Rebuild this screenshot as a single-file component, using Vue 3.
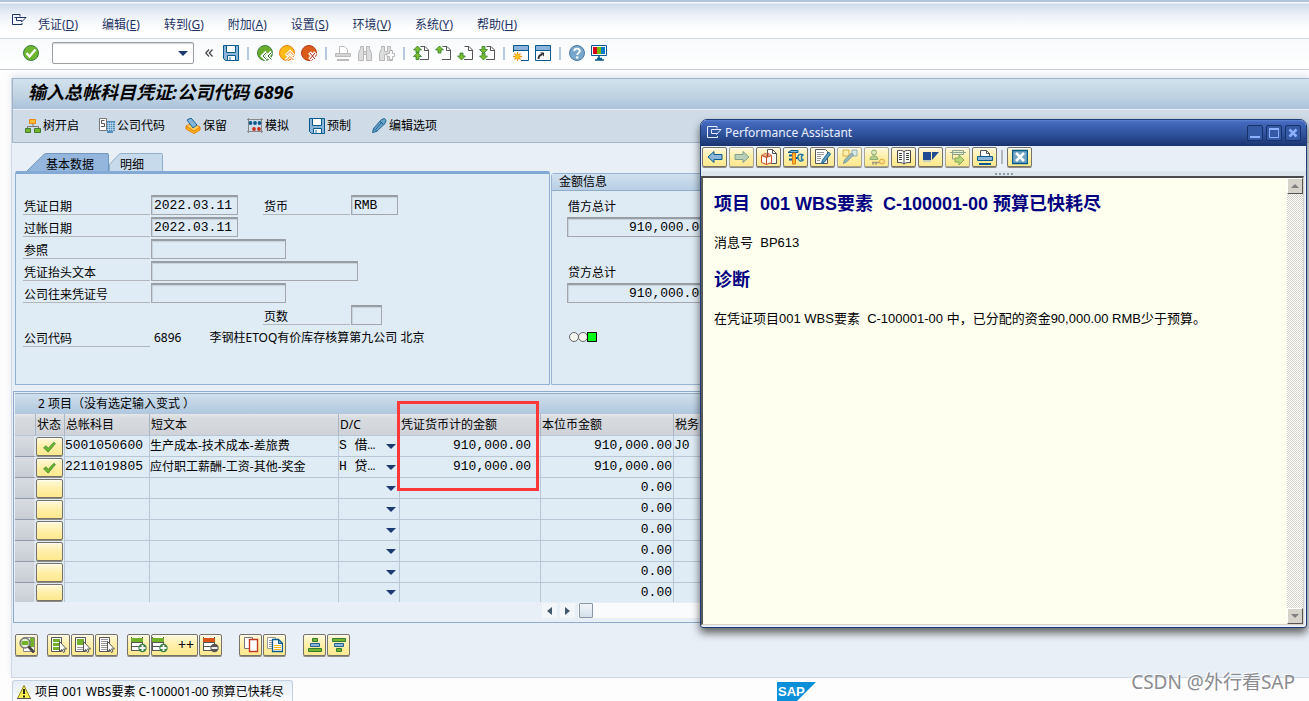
<script setup>
import { ref } from 'vue'

const menus = [
  ['凭证', 'D'], ['编辑', 'E'], ['转到', 'G'], ['附加', 'A'],
  ['设置', 'S'], ['环境', 'V'], ['系统', 'Y'], ['帮助', 'H'],
]

const page = '<path d="M7.5 1.5H12L15.5 5V14.5H7" fill="#fff" stroke="#555"/><path d="M11.5 1.5V5.5H15.5" fill="none" stroke="#555"/>'
const up = (x, y) => `<path d="M${x} ${y}l4 4h-2.500v3h-3v-3h-2.500z" fill="#7cbb2c" stroke="#2f7d32" stroke-width=".8"/>`
const down = (x, y) => `<path d="M${x} ${y}l4-4h-2.500v-3h-3v3h-2.500z" fill="#7cbb2c" stroke="#2f7d32" stroke-width=".8"/>`
const doc = '<path d="M.5.5h10v14H.5z" fill="#fff" stroke="#555"/>'
const cursor = '<path d="M8.500 4.500v10l2.500-2 1.500 3 1.500-1-1.500-2.500h3z" fill="#fff" stroke="#555"/>'
const rowsDoc = '<path d="M0 0h12v14H0z" fill="#fff"/><path d="M.5 0v14M11.500 0v14M0 5.500h12M0 9.500h12M0 13.500h12" stroke="#555" fill="none"/>'

const icons = {
  exit: '<path d="M9 3.500V1.500H1.500V11.500H11V10" fill="none" stroke="#1d3263"/><path d="M3.500 4.500H15L10.500 9V7.500H5.500V4.500" fill="#fff" stroke="#1d3263"/>',
  exitLight: '<path d="M11 3.500V1.500H1.500V12.500H11.500V11" fill="none" stroke="#e6edff"/><path d="M5.500 4.500H15L10.500 9.500V8.500H5.500V4.500" fill="none" stroke="#e6edff"/>',
  ok: '<circle cx="8" cy="8" r="7.500" fill="#6cb52d" stroke="#3f8045"/><path d="M3.500 8l3 3.500 6-7" fill="none" stroke="#fff" stroke-width="2.400"/>',
  save: '<path d="M.5.500h15v15H2.500l-2-2z" fill="#8cb6d9" stroke="#075b8c"/><path d="M3.500.500h9v7h-9zM4.500 10.500h8v5h-8z" fill="#fff" stroke="#075b8c"/><path d="M6 12h2v3H6z" fill="#8cb6d9"/>',
  back: '<circle cx="8" cy="8" r="7.500" fill="#69ad2b" stroke="#3f8045"/><path d="M9.500 7l-4 4 4 4M14.500 7l-4 4 4 4" stroke="#fff" stroke-width="3.200" fill="none"/><path d="M9.500 7.500L6 11l3.500 3.500M14.500 7.500L11 11l3.500 3.500" stroke="#2b7a35" stroke-width="1" fill="none"/>',
  exitUp: '<circle cx="8" cy="8" r="7.500" fill="#fdbb16" stroke="#ee7d19"/><path d="M7 10.500l4-4 4 4M7 15l4-4 4 4" stroke="#fff" stroke-width="3" fill="none"/><path d="M7.500 10L11 6.500l3.500 3.500M7.500 15l3.500-3.500 3.500 3.500" stroke="#ef7918" fill="none"/>',
  cancel: '<circle cx="8" cy="8" r="7.500" fill="#db5b1b" stroke="#b23b18"/><path d="M8.500 7.500l6 7M14.500 7.500l-6 7" stroke="#fff" stroke-width="3.600"/><path d="M9 8l5 6M14 8l-5 6" stroke="#b22c19" stroke-width="1"/>',
  printOff: '<path d="M4.500 8V1.500h5l3 3V8" fill="#fff" stroke="#bbb"/><path d="M.5 8.500h15v3H.5z" fill="#d3d3d3" stroke="#bbb"/><path d="M2 14h12v2H2z" fill="#bbb"/>',
  find: '<path d="M1.500 15.500v-7l2-5v-2h3v5h3v-5h3v2l2 5v7h-5v-6h-3v6z" fill="#ddd" stroke="#b7b7b7"/><path d="M6.500 5v5M9.500 5v5" stroke="#b7b7b7"/>',
  findNext: '<path d="M.5 15.500v-7l2-5v-2h3v5h3v-5h3v2l2 5v7h-5v-6h-3v6z" fill="#ddd" stroke="#b7b7b7"/><path d="M10.500 5.500h3v3h2v3h-2v3h-3v-3H8v-3h2.500z" fill="#fff" stroke="#b7b7b7"/>',
  first: page + up(4.5, 1) + up(4.5, 7.5),
  prev: page + up(4.5, 1),
  next: page + down(4.5, 15),
  last: page + down(4.5, 8.5) + down(4.5, 15),
  session: '<path d="M.5.500h15v15H.5z" fill="#fff" stroke="#075b8c"/><path d="M1 1h14v4H1z" fill="#8cb3db"/><path d="M0 5.500h16" stroke="#075b8c"/><path d="M0 7h8v9H0z" fill="#fff"/><path d="M4.500 7v9M0 11.500h9M1.500 8.500l6 6M7.500 8.500l-6 6" stroke="#f7941d" stroke-width="1.300"/><circle cx="4.500" cy="11.500" r="2.500" fill="#ffc21c"/>',
  shortcut: '<path d="M.5.500h15v15H.5z" fill="#fff" stroke="#075b8c"/><path d="M1 1h14v4H1z" fill="#8cb3db"/><path d="M0 5.500h16" stroke="#075b8c"/><path d="M3.500 14c0-3 1-4 3.500-4.500" stroke="#333" stroke-width="1.800" fill="none"/><path d="M5 7.500h4v4z" fill="#333"/>',
  help: '<circle cx="8" cy="8" r="7.500" fill="#79a6cc" stroke="#4b7ba6"/><path d="M5.300 6c0-3.200 5.600-3.200 5.500 0 0 1.800-2.600 2-2.600 4" stroke="#fff" stroke-width="1.900" fill="none"/><circle cx="8.200" cy="12.500" r="1.300" fill="#fff"/>',
  monitor: '<path d="M.5.500h15v10H.5z" fill="#fff" stroke="#075b8c"/><path d="M2 2h4v7H2z" fill="#d6001c"/><path d="M6 2h4v7H6z" fill="#76b900"/><path d="M10 2h4v7h-4z" fill="#0079c8"/><path d="M8 11v3M4 15h9M6 13.500h5" stroke="#075b8c" stroke-width="1.600"/>',
  tree: '<path d="M8 6v3M2.500 11V8.500h11V11" stroke="#777" fill="none"/><path d="M4.500 1.500h6v4h-6z" fill="#fdbb30" stroke="#e88715"/><path d="M.5 10.500h5v4h-5zM9.500 10.500h6v4h-6z" fill="#77b22f" stroke="#3f7d30"/>',
  company: '<path d="M.5.500h7v12h-7z" fill="#fff" stroke="#777"/><path d="M5.500 2.500H2.500v3H5.500V8.500H2" stroke="#555" fill="none"/><path d="M8 3h8v10h-2v2H8z" fill="#4e8cbc"/><path d="M9.500 4v9M11.500 4v9M13.500 4v9M8 5.500h8M8 7.500h8M8 9.500h8M8 11.500h8" stroke="#cbe2f3" stroke-width=".6"/>',
  hold: '<path d="M1 8l8 5 6-4v3l-6 3.500L1 11z" fill="#fdbb16" stroke="#e77d12"/><path d="M1 8l6-3 8 4-6 4z" fill="#ffd35a" stroke="#e77d12"/><path d="M2 2l4-2 6 7-4 3z" fill="#84b6dc" stroke="#1e608f"/>',
  simulate: '<path d="M1.500 0v15M14.500 0v15M0 1.500h16M0 13.500h16" stroke="#888"/><g fill="#075b8c"><circle cx="3.500" cy="5" r="1.900"/><circle cx="8" cy="5" r="1.900"/><circle cx="12.500" cy="5" r="1.900"/></g><g fill="#c9301c"><circle cx="7" cy="11" r="1.900"/><circle cx="12" cy="11" r="1.900"/></g>',
  pencil: '<path d="M1.500 14.500l1-4 8-9 3-1 1.500 2-1 3-8.500 8z" fill="#69a3c9" stroke="#1f658f"/><path d="M3 10.500l3 3M9 3.500l3.500 3M5 11l6-7" stroke="#1f658f" fill="none"/>',
  check: '<path d="M1 8l3-2.500 2.500 3 6.500-7 2 1.500-8.500 10z" fill="#6fb62c" stroke="#38803a" stroke-width=".8"/>',
  detail: '<path d="M4.500.500h11v14h-11z" fill="#fff" stroke="#888"/><path d="M11 1h4v9h-4z" fill="#72b12a"/><circle cx="6" cy="6" r="5" fill="#e4efd9" stroke="#777" stroke-width="1.400"/><path d="M2.500 4h7v4h-7z" fill="#72b12a"/><path d="M9.500 9.500l5.500 6" stroke="#444" stroke-width="2.800"/>',
  selAll: doc + '<path d="M2 2h7v3H2zM2 6h7v3H2zM2 10h7v3H2z" fill="#72b12a"/>' + cursor,
  selBlock: doc + '<path d="M2 2h7v6H2z" fill="#72b12a"/><path d="M2 10.500h7M2 12.500h7" stroke="#999"/>' + cursor,
  desel: doc + '<path d="M2 2.500h7M2 4.500h7M2 6.500h7M2 8.500h7M2 10.500h7M2 12.500h7" stroke="#999"/>' + cursor,
  insert: rowsDoc + '<path d="M0 1h12v4H0z" fill="#72b12a"/><circle cx="11.500" cy="11" r="4.200" fill="#368044"/><path d="M11.500 8v6M8.500 11h6" stroke="#fff" stroke-width="1.800"/>',
  remove: rowsDoc + '<path d="M0 1h12v4H0z" fill="#dd5317"/><circle cx="11.500" cy="11" r="4.200" fill="#555"/><path d="M8.500 11h6" stroke="#fff" stroke-width="1.800"/>',
  copyRed: '<path d="M1.500.500h8v11h-8z" fill="#fff" stroke="#777"/><path d="M6.500 2.500h8v12h-8z" fill="#fff" stroke="#c33a24" stroke-width="1.400"/>',
  copyBlue: '<path d="M.5.500h8v11h-8z" fill="#fff" stroke="#999"/><path d="M2 3.500h3M2 5.500h3M2 7.500h3M2 9.500h3" stroke="#999"/><path d="M5.500 2.500h6l4 4v8h-10z" fill="#fff" stroke="#075b8c" stroke-width="1.300"/><path d="M11.500 2.500v4h4z" fill="#7cabd0" stroke="#075b8c"/><path d="M7 8.500h7M7 10.500h7M7 12.500h7" stroke="#f4b51c"/>',
  sortUp: '<path d="M5.500 1.500h5v3h-5zM1.500 11.500h13v3h-13z" fill="#77b42d" stroke="#2f7d32"/><path d="M3.500 6.500h9v3h-9z" fill="#8cb6d9" stroke="#1e608f"/>',
  sortDown: '<path d="M1.500 1.500h13v3h-13zM5.500 11.500h5v3h-5z" fill="#77b42d" stroke="#2f7d32"/><path d="M3.500 6.500h9v3h-9z" fill="#8cb6d9" stroke="#1e608f"/>',
  arrowL: '<path d="M1 8l6-5.500v3h8v5H7v3z" fill="#8cb6d9" stroke="#075b8c"/>',
  arrowR: '<path d="M15 8L9 2.500v3H1v5h8v3z" fill="#b9d0b8" stroke="#7ea08c"/>',
  book: '<path d="M6.500 10V.500h5l4 4v10h-6" fill="#fff" stroke="#555"/><path d="M11.500.500v4h4" fill="none" stroke="#555"/><path d="M.5 6.500l5 2 5-2v7l-5 2-5-2zM5.500 8.500v7" fill="#fff" stroke="#cf4a1e"/><path d="M1 6l4-2 1 4zM10 6L7 4v4z" fill="#f6b79b" stroke="#cf4a1e" stroke-width=".6"/>',
  tools: '<path d="M0 3.500h10V1.500H3z" fill="#8cb6d9" stroke="#075b8c"/><path d="M4.500 4h3v11h-3z" fill="#fdbb30" stroke="#e37818"/><path d="M1 6.500h3M1 10.500h3M8 9h2" stroke="#075b8c" stroke-width="2"/><path d="M15.500 6c-4-2-6 0-5.500 3s3 4 5.500 2M15.500 6l-2 1v3l2 1" fill="none" stroke="#287ba7" stroke-width="1.500"/>',
  editDoc: '<path d="M.5.500h10l2 2v12H.5z" fill="#fff" stroke="#555"/><path d="M2 3.500h7M2 5.500h7M2 7.500h4M2 9.500h4M2 11.500h3" stroke="#999"/><path d="M6.500 14.500l1-3.500 6-8 2 2-6 8z" fill="#5d9dc4" stroke="#1f658f"/>',
  linkEdit: '<path d="M1 1h6v6H1z" fill="#fff0b0" stroke="#d9ab3c"/><path d="M10 1h5v6h-5z" fill="#d8e7e8" stroke="#8fb0b2"/><path d="M1.500 14.500l1-3.500 7-7 2 2-7 7z" fill="#98b8bb" stroke="#779a9c"/>',
  userKey: '<circle cx="5" cy="3.500" r="2.500" fill="#dbe8b5" stroke="#8eaa76"/><path d="M1 10.500C1 5.500 9 5.500 9 10.500z" fill="#b6d087" stroke="#8eaa76"/><path d="M3 13.500h8M4 14v2M7 14v2" stroke="#9e9a77" stroke-width="1.300"/><circle cx="13" cy="12.500" r="2.500" fill="#ffe08a" stroke="#dba841"/>',
  openBook: '<path d="M8 2.500C6 1 3 1.500 1.500 1.500v12c2 0 5 0 6.500 1.500 1.500-1.500 4.500-1.500 6.500-1.500v-12c-1.500 0-4.500-.500-6.500 1z" fill="#fff" stroke="#444"/><path d="M8 2.500v12M3 4.500h3M3 6.500h3M3 8.500h3M3 10.500h3M10 4.500h3M10 6.500h3M10 8.500h3M10 10.500h3" stroke="#444"/>',
  flag: '<path d="M0 3h8v8H0z" fill="#204a92"/><path d="M9 3h7l-7 8z" fill="#204a92"/><path d="M0 12h8" stroke="#8cb6d9"/>',
  flow: '<path d="M2.500 1.500h11v4h-11zM0 3.500h16" fill="#e9edce" stroke="#8fa48c"/><path d="M2.500 5v5h4" fill="none" stroke="#8fa48c"/><path d="M5 9h4V6l5 5-5 5v-3H5z" fill="#b7d779" stroke="#85a85e"/>',
  print: '<path d="M3.500 8V1.500h6l3 3V8" fill="#fff" stroke="#555"/><path d="M9.500 1.500v3h3" fill="none" stroke="#555"/><path d="M.5 7.500h15v4H.5z" fill="#8cb6d9" stroke="#075b8c"/><path d="M2 14h12v2H2z" fill="#075b8c"/>',
  close: '<path d="M.5 1.500h15v13H.5z" fill="#75a5c4" stroke="#075b8c" stroke-width="1.400"/><path d="M4 4l8 8M12 4l-8 8" stroke="#fff" stroke-width="2.600"/>',
  warn: '<path d="M8 1.500l6.500 13h-13z" fill="#fdf04c" stroke="#8a8520" stroke-linejoin="round"/><path d="M1 14.500h14" stroke="#555"/><path d="M7 5h2v5H7zM7 11.500h2v2H7z" fill="#222"/>',
}

const toolbar = [
  [['save', '保存']],
  [['back', '返回'], ['exitUp', '退出'], ['cancel', '取消']],
  [['printOff', '打印'], ['find', '查找'], ['findNext', '继续查找']],
  [['first', '首页'], ['prev', '上一页'], ['next', '下一页'], ['last', '末页']],
  [['session', '新会话'], ['shortcut', '快捷方式']],
  [['help', '帮助'], ['monitor', '布局']],
]

const actions = [
  ['tree', '树开启'], ['company', '公司代码'], ['hold', '保留'],
  ['simulate', '模拟'], ['save', '预制'], ['pencil', '编辑选项'],
]

const rows = [
  { account: '5001050600', text: '生产成本-技术成本-差旅费', dc: 'S 借…', amount: '910,000.00', local: '910,000.00', tax: 'J0', ok: true },
  { account: '2211019805', text: '应付职工薪酬-工资-其他-奖金', dc: 'H 贷…', amount: '910,000.00', local: '910,000.00', tax: '', ok: true },
  ...Array.from({ length: 6 }, () => ({ account: '', text: '', dc: '', amount: '', local: '0.00', tax: '', ok: false })),
]

const footGroups = [
  ['detail'], ['selAll', 'selBlock', 'desel'], ['insert', 'insertMany', 'remove'],
  ['copyRed', 'copyBlue'], ['sortUp', 'sortDown'],
]

const helpTools = [
  'arrowL', 'arrowR', 'book', 'tools', 'editDoc', 'linkEdit',
  'userKey', 'openBook', 'flag', 'flow', 'print',
]
const dimmed = ['arrowR', 'linkEdit', 'userKey', 'flow']

const command = ref('')
</script>

<template>
  <div class="window">
    <nav class="menubar">
      <svg class="icon" viewBox="0 0 16 16" v-html="icons.exit"></svg>
      <button v-for="m in menus" :key="m[1]" class="menu">{{ m[0] }}(<u>{{ m[1] }}</u>)</button>
    </nav>

    <div class="toolbar">
      <button class="plain" aria-label="回车"><svg class="icon" viewBox="0 0 16 16" v-html="icons.ok"></svg></button>
      <div class="combo">
        <input v-model="command" aria-label="命令" />
        <button class="plain drop" aria-label="命令历史"><i class="caret"></i></button>
      </div>
      <button class="plain chevrons" aria-label="收起">
        <svg viewBox="0 0 8 8"><path d="M4 .5L.8 4 4 7.500M7.500.500L4.300 4l3.200 3.500" fill="none" stroke="#444" stroke-width="1.200" /></svg>
      </button>
      <template v-for="(group, g) in toolbar" :key="g">
        <span v-if="g" class="sep"></span>
        <button v-for="t in group" :key="t[0]" class="plain" :aria-label="t[1]">
          <svg class="icon" viewBox="0 0 16 16" v-html="icons[t[0]]"></svg>
        </button>
      </template>
    </div>

    <main class="screen">
      <h1 class="title">输入总帐科目凭证:公司代码 6896</h1>
      <div class="actions">
        <button v-for="a in actions" :key="a[0]" class="action">
          <svg class="icon" viewBox="0 0 16 16" v-html="icons[a[0]]"></svg>{{ a[1] }}
        </button>
      </div>

      <div class="upper">
        <section class="basic">
          <div class="tabs">
            <button class="tab active">
              <svg viewBox="0 0 82 19" preserveAspectRatio="none"><path d="M0 19L17 1.500Q18 .500 20 .500H80Q81.500.500 81.500 2V19" fill="#94b6dc" stroke="#6b93bd" /></svg>
              <span>基本数据</span>
            </button>
            <button class="tab second">
              <svg viewBox="0 0 54 19" preserveAspectRatio="none"><path d="M.5 19V12L10 1.500Q11 .500 13 .500H52.500Q53.500.500 53.500 2V19" fill="#c7daeb" stroke="#8eacca" /></svg>
              <span>明细</span>
            </button>
          </div>
          <div class="panel">
            <div class="form">
              <label for="docdate">凭证日期</label><input id="docdate" class="w-date" value="2022.03.11" readonly />
              <label for="currency">货币</label><input id="currency" class="w-cur" value="RMB" readonly />
              <label for="postdate" class="first">过帐日期</label><input id="postdate" class="w-date" value="2022.03.11" readonly />
              <label for="refno" class="first">参照</label><input id="refno" class="w-ref span" readonly />
              <label for="headtext" class="first">凭证抬头文本</label><input id="headtext" class="w-text span" readonly />
              <label for="crossno" class="first">公司往来凭证号</label><input id="crossno" class="w-ref span" readonly />
              <label for="pages" class="third">页数</label><input id="pages" class="w-pages" readonly />
              <span class="label first">公司代码</span>
              <span class="company span"><span class="code">6896</span><span>李钢柱ETOQ有价库存核算第九公司 北京</span></span>
            </div>
          </div>
        </section>

        <section class="amounts">
          <h2>金额信息</h2>
          <div class="totals">
            <label for="debit">借方总计</label>
            <input id="debit" value="910,000.00" readonly />
            <label for="credit" class="lower">贷方总计</label>
            <input id="credit" value="910,000.00" readonly />
            <svg class="lights" viewBox="0 0 29 10">
              <circle cx="5" cy="5" r="4.500" fill="#f5f5f0" stroke="#666" />
              <circle cx="14" cy="5" r="4.500" fill="#f5f5f0" stroke="#666" />
              <rect x="18.500" y=".5" width="9" height="9" fill="#00ff16" stroke="#111" />
            </svg>
          </div>
        </section>
      </div>

      <section class="items">
        <h2>2 项目（没有选定输入变式 ）</h2>
        <table>
          <colgroup>
            <col class="c-sel" /><col class="c-stat" /><col class="c-acc" /><col class="c-text" />
            <col class="c-dc" /><col class="c-amt" /><col class="c-loc" /><col />
          </colgroup>
          <thead>
            <tr>
              <th></th><th>状态</th><th>总帐科目</th><th>短文本</th><th>D/C</th>
              <th>凭证货币计的金额</th><th>本位币金额</th><th>税务</th>
            </tr>
          </thead>
          <tbody>
            <tr v-for="(r, i) in rows" :key="i">
              <td class="sel"></td>
              <td class="stat">
                <button class="yellow" aria-label="状态"><svg v-if="r.ok" class="tick" viewBox="0 0 16 14" v-html="icons.check"></svg></button>
              </td>
              <td class="mono">{{ r.account }}</td>
              <td class="desc">{{ r.text }}</td>
              <td class="dc">
                <div><select aria-label="D/C"><option>{{ r.dc }}</option></select><i class="caret"></i></div>
              </td>
              <td class="mono num amount">{{ r.amount }}</td>
              <td class="mono num">{{ r.local }}</td>
              <td class="mono">{{ r.tax }}</td>
            </tr>
          </tbody>
        </table>
        <div class="hscroll">
          <button class="plain step" aria-label="左移"><i class="tri left"></i></button>
          <button class="plain step" aria-label="右移"><i class="tri right"></i></button>
          <div class="track"><span class="thumb"></span></div>
        </div>
        <div class="marker"></div>
      </section>

      <div class="foot">
        <div v-for="(g, i) in footGroups" :key="i" class="group">
          <button v-for="b in g" :key="b" class="yellow tool" :class="{ many: b === 'insertMany' }" :aria-label="b">
            <svg class="icon" viewBox="0 0 16 16" v-html="icons[b === 'insertMany' ? 'insert' : b]"></svg>
            <span v-if="b === 'insertMany'">++</span>
          </button>
        </div>
      </div>
    </main>

    <footer class="statusbar">
      <div class="message">
        <svg class="icon" viewBox="0 0 16 16" v-html="icons.warn"></svg>项目 001 WBS要素 C-100001-00 预算已快耗尽
      </div>
      <svg class="sap" viewBox="0 0 39 19">
        <path d="M0 0H39L20 19H0Z" fill="#0a8fd8" />
        <text x="1" y="14" font-family="Liberation Sans, Arial, sans-serif" font-size="13" font-weight="bold" fill="#fff">SAP</text>
      </svg>
    </footer>

    <aside class="dialog" role="dialog" aria-label="Performance Assistant">
      <header>
        <svg class="icon" viewBox="0 0 16 16" v-html="icons.exitLight"></svg>
        <span class="name">Performance Assistant</span>
        <button aria-label="最小化"><svg viewBox="0 0 14 14"><path d="M2 11h10" stroke="#8fb0ff" stroke-width="2" /></svg></button>
        <button aria-label="最大化"><svg viewBox="0 0 14 14"><path d="M2.500 3.500h9v8h-9z" stroke="#8fb0ff" fill="none" /><path d="M2 3h10" stroke="#8fb0ff" stroke-width="2" /></svg></button>
        <button aria-label="关闭"><svg viewBox="0 0 14 14"><path d="M3.500 3.500l7 7M10.500 3.500l-7 7" stroke="#8fb0ff" stroke-width="2.500" /></svg></button>
      </header>
      <div class="helptools">
        <button v-for="t in helpTools" :key="t" class="yellow" :class="{ dim: dimmed.includes(t) }" :aria-label="t">
          <svg class="icon" viewBox="0 0 16 16" v-html="icons[t]"></svg>
        </button>
        <span class="bar"></span>
        <button class="yellow" aria-label="关闭"><svg class="icon" viewBox="0 0 16 16" v-html="icons.close"></svg></button>
      </div>
      <div class="splitter"><i v-for="n in 5" :key="n"></i></div>
      <div class="help">
        <article>
          <h3>项目&nbsp; 001 WBS要素&nbsp; C-100001-00 预算已快耗尽</h3>
          <p>消息号&nbsp; BP613</p>
          <h3>诊断</h3>
          <p>在凭证项目001 WBS要素&nbsp; C-100001-00 中，已分配的资金90,000.00 RMB少于预算。</p>
        </article>
        <div class="vscroll">
          <button aria-label="上"><i class="tri up"></i></button>
          <button aria-label="下"><i class="tri down"></i></button>
        </div>
      </div>
    </aside>

    <div class="watermark">CSDN @外行看SAP</div>
  </div>
</template>

<style>
body {
  overflow: hidden;
}
</style>

<style scoped>
.window {
  position: relative;
  display: flex;
  flex-direction: column;
  min-height: 100vh;
  overflow: hidden;
  background: #fdfdfe;
  color: #000;
  font-family: "Noto Sans", "Noto Sans CJK SC", sans-serif;
  font-size: 12px;
  line-height: 16px;
}
.window * {
  box-sizing: border-box;
}
button, input, select {
  margin: 0;
  padding: 0;
  border: 0;
  background: none;
  color: inherit;
  font: inherit;
}
h1, h2, h3, p {
  margin: 0;
}
.icon {
  display: block;
  flex: none;
  width: 16px;
  height: 16px;
}
.menubar {
  display: flex;
  gap: 24px;
  height: 39px;
  padding: 11px 0 0 11px;
  border-top: 2px solid #b3c3d8;
  border-bottom: 1px solid #d5dae2;
  background: linear-gradient(#f4f7fb 0, #f4f7fb 1px, #d0dceb 2px, #eef3f9 14px, #fff 28px);
  color: #1d3263;
}
.menubar .icon {
  margin-right: -13px;
}
.menu {
  height: 22px;
  padding-top: 1px;
  white-space: nowrap;
}
.toolbar {
  display: flex;
  align-items: center;
  gap: 6px;
  height: 31px;
  padding: 0 0 2px 23px;
  border-bottom: 1px solid #c5cbd6;
  background: linear-gradient(#f8fafc, #fff);
}
.plain {
  display: grid;
  place-items: center;
  flex: none;
}
.combo {
  display: flex;
  align-items: center;
  width: 142px;
  height: 22px;
  margin: 0 5px 0 7px;
  border: 1px solid #9b9fa5;
  border-radius: 2px;
  background: #fff;
  box-shadow: inset 0 1px 1px #d3d3d3;
}
.combo input {
  flex: 1;
  min-width: 0;
  height: 18px;
  padding: 0 4px;
}
.drop {
  width: 20px;
  height: 18px;
}
.caret {
  flex: none;
  width: 0;
  height: 0;
  border: 5px solid transparent;
  border-top-color: #1d3a70;
  border-bottom: 0;
}
.chevrons {
  width: 8px;
  margin-right: 4px;
}
.chevrons svg {
  width: 8px;
  height: 8px;
}
.sep {
  width: 2px;
  height: 13px;
  margin: 0 2px;
  background: #b7c9df;
}
.screen {
  flex: 1;
  margin: 8px 0 0 11px;
  border: solid #cfd8e3;
  border-width: 0 0 1px 1px;
  background: #e8eff6;
  box-shadow: 0 -3px 6px #e3e8f0;
}
.title {
  height: 31px;
  padding: 0 0 0 15px;
  border-top: 1px solid #9fb2ca;
  border-left: 1px solid #9fb2ca;
  background: linear-gradient(#d2e2ee, #c2d5e3 50%, #abc2db);
  font-size: 18px;
  font-style: italic;
  line-height: 27px;
  white-space: nowrap;
}
.actions {
  display: flex;
  gap: 20px;
  height: 34px;
  padding: 0 12px;
  border: solid #a2b7cc;
  border-width: 0 0 1px 1px;
  background: #cfdce7;
  box-shadow: inset 0 1px #eaf2f8;
}
.action {
  display: flex;
  align-items: center;
  gap: 2px;
  white-space: nowrap;
}
.upper {
  display: flex;
  gap: 1px;
  padding: 10px 10px 0 3px;
}
.basic {
  display: flex;
  flex-direction: column;
  width: 535px;
  flex: none;
}
.tabs {
  display: flex;
  height: 18px;
  padding-left: 12px;
}
.tab {
  position: relative;
  width: 82px;
  height: 18px;
}
.tab.second {
  width: 54px;
}
.tab svg {
  position: absolute;
  inset: 0;
  width: 100%;
  height: 100%;
}
.tab span {
  position: relative;
  display: block;
  padding: 4px 0 0 19px;
  text-align: left;
}
.tab.second span {
  padding-left: 11px;
}
.panel {
  flex: 1;
  border: 1px solid #91afd0;
  border-top: 3px solid #83a9d4;
  border-radius: 2px 2px 0 0;
  background: #dfebf5;
}
.form {
  display: grid;
  grid-template-columns: 128px 112px 88px 1fr;
  grid-auto-rows: 22px;
  padding: 21px 0 35px 7px;
}
.form label, .label {
  height: 20px;
  margin-right: 1px;
  padding: 4px 0 0 1px;
  border-bottom: 1px solid #b2b6ba;
  line-height: 15px;
  white-space: nowrap;
}
.form .first {
  grid-column: 1;
}
.form .third {
  grid-column: 3;
}
.form .span {
  grid-column: 2 / -1;
}
.form input, .totals input {
  height: 20px;
  border: 1px solid #a3a7ab;
  border-top: 2px solid #989ea4;
  background: #dfebf4;
  box-shadow: inset 1px 1px 1px #c6d2dc;
  padding: 0 2px;
  font-family: "Liberation Mono", "Noto Sans CJK SC", monospace;
  font-size: 13px;
}
.w-date { width: 87px; }
.w-cur { width: 47px; }
.w-ref { width: 135px; }
.w-text { width: 207px; }
.w-pages { width: 31px; }
.company {
  display: flex;
  gap: 28px;
  padding: 3px 0 0 3px;
  white-space: nowrap;
}
.amounts {
  flex: 1;
  margin-top: 20px;
  border: 1px solid #9ab4d0;
  border-radius: 3px 3px 0 0;
  background: #deeaf4;
}
.amounts h2 {
  height: 17px;
  padding-left: 7px;
  border-bottom: 1px solid #8eacca;
  background: linear-gradient(#d0e0ee, #b9cfe5);
  font-size: 12px;
  font-weight: normal;
}
.totals {
  display: flex;
  flex-direction: column;
  align-items: flex-start;
  padding: 4px 0 0 15px;
}
.totals label {
  height: 22px;
  padding: 4px 0 0 1px;
}
.totals .lower {
  margin-top: 24px;
}
.totals input {
  width: 143px;
  text-align: right;
}
.lights {
  width: 29px;
  height: 10px;
  margin: 29px 0 0 2px;
}
.items {
  position: relative;
  margin: 6px 10px 0 1px;
  border: 1px solid #8fabc9;
  padding: 1px 1px 3px 1px;
}
.items h2 {
  height: 21px;
  padding: 2px 0 0 23px;
  border-top: 1px solid #8fabc9;
  background: linear-gradient(#cfdfec, #b0c7de);
  font-size: 12px;
  font-weight: normal;
}
table {
  width: 100%;
  table-layout: fixed;
  border-collapse: separate;
  border-spacing: 0;
}
.c-sel { width: 21px; }
.c-stat { width: 29px; }
.c-acc { width: 85px; }
.c-text { width: 189px; }
.c-dc { width: 61px; }
.c-amt { width: 141px; }
.c-loc { width: 133px; }
th {
  height: 22px;
  padding: 0 0 0 1px;
  border-right: 1px solid #a9b5c3;
  border-bottom: 1px solid #b8c6d5;
  background: linear-gradient(#e4e6e8, #d8dbdf 20%, #cfd3d9);
  font-weight: normal;
  text-align: left;
  white-space: nowrap;
}
td {
  height: 21px;
  padding: 0;
  border-right: 1px solid #b8c6d5;
  border-bottom: 1px solid #b8c6d5;
  background: #dfebf5;
  white-space: nowrap;
  overflow: hidden;
}
tbody tr:last-child td {
  height: 19px;
  border-bottom: 0;
}
td.sel {
  border-right: 2px solid #dfe6ee;
  border-bottom-color: #8f99a8;
  background: linear-gradient(#d8dce2, #c8cdd5);
}
td.stat {
  padding-right: 1px;
  border-bottom: 0;
}
.yellow {
  display: grid;
  place-items: center;
  border: 1px solid #77736a;
  border-radius: 2px;
  background: linear-gradient(#fff8dc, #ffefa8 50%, #fde98f);
  box-shadow: inset 0 1px #fffdf2, 0 1px #8f8c84;
}
td .yellow {
  width: 27px;
  height: 19px;
}
tbody tr:last-child .yellow {
  height: 17px;
}
.tick {
  width: 15px;
  height: 12px;
}
.mono, .dc select {
  font-family: "Liberation Mono", "Noto Sans CJK SC", monospace;
  font-size: 13px;
}
.num {
  padding-right: 1px;
  text-align: right;
}
.amount {
  padding-right: 9px;
}
.dc div {
  display: flex;
  align-items: center;
  padding-right: 3px;
}
.dc select {
  flex: 1;
  min-width: 0;
  height: 18px;
  appearance: none;
}
.hscroll {
  display: flex;
  gap: 3px;
  height: 17px;
  padding: 1px 0 1px 527px;
}
.step {
  width: 15px;
  height: 15px;
  background: #f3f6f9;
}
.tri {
  width: 0;
  height: 0;
  border: 4px solid transparent;
}
.left { border-right: 5px solid #44586b; border-left: 0; }
.right { border-left: 5px solid #44586b; border-right: 0; }
.up { border-bottom-color: #808080; border-top: 0; }
.down { border-top-color: #808080; border-bottom: 0; }
.track {
  flex: 1;
  height: 15px;
  padding-left: 1px;
  background: #fafbfc;
}
.thumb {
  display: block;
  width: 14px;
  height: 15px;
  border: 1px solid #8796a5;
  border-radius: 1px;
  background: linear-gradient(#f2f6fa, #d4e0eb);
}
.marker {
  position: absolute;
  top: 9px;
  left: 383px;
  width: 142px;
  height: 90px;
  border: 3px solid #fb3737;
  pointer-events: none;
}
.foot {
  display: flex;
  gap: 9px;
  padding: 11px 0 21px 3px;
}
.group {
  display: flex;
  gap: 1px;
}
.group:nth-child(n + 4) {
  margin-left: 8px;
}
.tool {
  width: 23px;
  height: 22px;
}
.many {
  display: flex;
  align-items: center;
  gap: 10px;
  width: 47px;
}
.many span {
  font-size: 14px;
}
.statusbar {
  display: flex;
  align-items: flex-start;
  justify-content: space-between;
  height: 23px;
  padding: 2px 493px 0 12px;
}
.message {
  display: flex;
  align-items: center;
  gap: 3px;
  height: 21px;
  padding: 1px 8px 0 3px;
  border: 1px solid #c2d0df;
  border-bottom: 0;
  border-radius: 3px 3px 0 0;
  background: linear-gradient(#e6edf5, #fbfcfd);
  white-space: nowrap;
}
.sap {
  width: 39px;
  height: 19px;
  margin-top: 2px;
}
.dialog {
  position: absolute;
  top: 119px;
  right: 2px;
  left: 700px;
  display: flex;
  flex-direction: column;
  height: 509px;
  border: 1px solid #1e3c78;
  border-radius: 7px 7px 3px 3px;
  background: #e8eff6;
  box-shadow: 0 5px 9px rgba(0, 0, 0, 0.6);
  overflow: hidden;
}
.dialog header {
  display: flex;
  align-items: center;
  gap: 3px;
  height: 26px;
  padding: 0 5px;
  background: linear-gradient(#5b83d2 0, #4469be 2px, #3255a0 50%, #1a3470);
  color: #e9efff;
}
.name {
  flex: 1;
}
.dialog header button {
  width: 16px;
  height: 16px;
  border: 1px solid #17306a;
  border-radius: 2px;
  background: #3459a5;
}
.dialog header svg {
  display: block;
}
.helptools {
  display: flex;
  gap: 2px;
  height: 25px;
  padding: 1px 1px 0;
}
.helptools .yellow {
  width: 25px;
  height: 20px;
}
.dim {
  border-color: #a9a593;
}
.bar {
  width: 2px;
  height: 14px;
  margin: 3px 2px 0;
  background: #b5b8bd;
}
.splitter {
  display: flex;
  justify-content: center;
  align-items: center;
  gap: 2px;
  height: 5px;
  background: #dce5eb;
}
.splitter i {
  width: 2px;
  height: 2px;
  background: #8d9bab;
}
.help {
  flex: 1;
  display: flex;
  margin: 0 2px 2px 0;
  border: 1px solid #d6d3cb;
  border-top: 2px solid #4a4a4a;
  border-left: 2px solid #5a5a5a;
  background: #fffff0;
}
article {
  flex: 1;
  padding: 13px 11px;
  font-family: "Liberation Sans", "Noto Sans CJK SC", sans-serif;
  font-size: 13px;
}
article h3 {
  color: #000080;
  font-size: 18px;
  line-height: 26px;
}
article p {
  padding: 17px 0 15px;
  line-height: 18px;
}
.vscroll {
  display: flex;
  flex-direction: column;
  justify-content: space-between;
  width: 16px;
  background: repeating-conic-gradient(#d6d3cb 0 25%, #fff 0 50%) 0 0 / 2px 2px;
}
.vscroll button {
  display: grid;
  place-items: center;
  height: 16px;
  border: 1px solid #fff;
  border-right-color: #555;
  border-bottom-color: #555;
  background: #d6d3cb;
}
.watermark {
  position: absolute;
  right: 14px;
  bottom: 6px;
  color: #8b8c90;
  font-size: 19px;
  line-height: 26px;
  text-shadow: -1px -1px #fff;
}
</style>
